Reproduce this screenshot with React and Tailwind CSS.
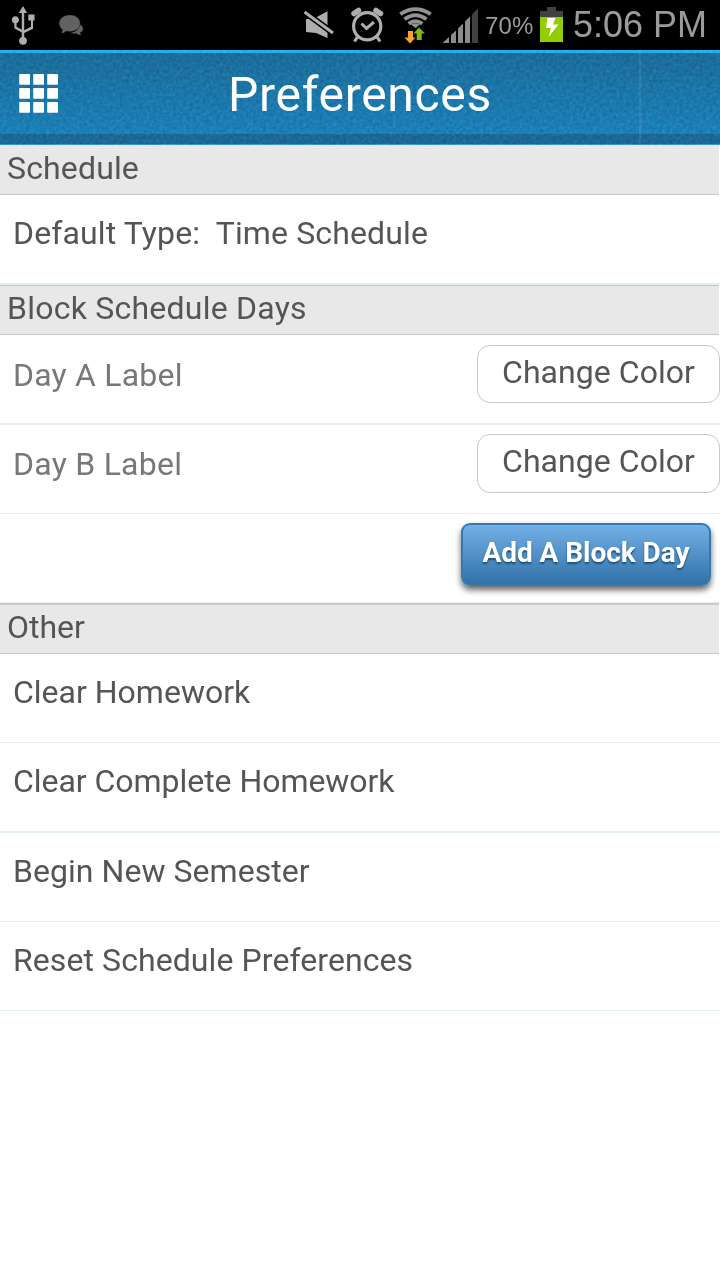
function StatusBar() {
  return (
    <div className="flex h-[50px] items-start bg-black font-['Liberation_Sans',sans-serif] text-[#9b9b9b]">
      <svg className="block h-[50px] w-[485px] shrink-0" viewBox="0 0 485 50" fill="#aeaeae">
        <path d="M23 6l4.200 7h-3v17.200l6.800-3.400V20.500h-2.700v-6h6.200v6h-1.500v8.300l-8.800 4.200v4a4 4 0 1 1-2.400 0v-4.500l-7.500-4.300v-5a3.600 3.600 0 1 1 2.200 0v3.500l5.300 3V13h-3z" />
        <g fill="#626262">
          <path d="M79 23.500c5 3 5.500 7 1 9.300l1 2.200c-2 0-3.500-.6-5-1.700-2 .4-4 .3-5.500-.3 6-1.300 9-4.500 8.500-9.500z" />
          <path d="M70 14.800c6 0 10.300 3.800 10.300 8.400S76 31.700 70 31.700c-1.500 0-2.600-.2-3.700-.5-1.700 1.500-3.500 2.200-5.300 2.200l1.500-3.500c-2.200-1.600-3.500-4-3.500-6.700 0-4.600 4.800-8.400 11-8.400z" stroke="#000" strokeWidth=".5" />
        </g>
        <path d="M306 19h7l14.500-7.800V38L316 33l-10-1z" />
        <path d="M304.500 12l28.500 21" stroke="#000" strokeWidth="6" />
        <path d="M304.500 12l28.500 21" stroke="#aeaeae" strokeWidth="3" />
        <g fill="none" stroke="#aeaeae">
          <circle cx="367.200" cy="26.300" r="13.600" strokeWidth="3.200" />
          <path d="M361.500 23.500l5 5 7.500-6.500" strokeWidth="3" />
          <path d="M358 36l-3.500 5.500M376.500 36l3.500 5.500" strokeWidth="3.200" />
          <path d="M354 13.500l4.500-3M380.500 13.500l-4.500-3" strokeWidth="5.500" strokeLinecap="round" />
        </g>
        <g fill="none" stroke="#929292" strokeWidth="3.800">
          <path d="M400.300 14.200Q415.500 4 430.700 14.200" />
          <path d="M404.500 19.200Q415.500 11 426.500 19.200" />
          <path d="M408.700 23.700Q415.500 18.500 422.300 23.700" />
        </g>
        <path d="M411 24.500q4.500-2.500 9 0L415.500 28z" fill="#929292" />
        <path d="M408 31h5v6.500h2.500L410 43.500 404.500 37.500h3.500z" fill="#fba02c" />
        <path d="M419 27.500l6 6h-3.300V40h-5v-6.500h-3.200z" fill="#80ba10" />
        <path d="M442.500 43l6.500-6v6z M451 35l5-4.500V43h-5z M458 28.500l5-5V43h-5z M465 21.500l5-5V43h-5z" fill="#8c8c8c" />
        <path d="M472 14.500l6-6V43h-6z" fill="#414141" />
      </svg>
      <span className="mt-[12px] w-[55px] shrink-0 text-[24px] leading-[28px] tracking-[0.1px] whitespace-nowrap">70%</span>
      <svg className="block h-[50px] w-[23px] shrink-0" viewBox="0 0 23 50">
        <path d="M0 11h7V7h9v4h7v6H0z" fill="#414141" />
        <path d="M0 17h23v25H0z" fill="#93cd00" />
        <path d="M7.500 18h8L13 24.500h5.500L8.500 37l2.500-9H6z" fill="#fff" />
      </svg>
      <span className="mt-[4px] ml-[10px] text-[36px] leading-[42px] whitespace-nowrap">5:06 PM</span>
    </div>
  );
}

function Header() {
  return (
    <header className="relative flex h-[95px] flex-col bg-[#1b6893]">
      <div className="h-[3px] bg-[#22aff1]" />
      <div className="h-[81px] bg-linear-to-b from-[#1b6c98] to-[#1b80b8]" />
      <div className="h-[10px] bg-[#1b6893]" />
      <div className="h-px bg-[#3396c8]" />
      <svg className="absolute inset-0 h-full w-full opacity-20 mix-blend-overlay" viewBox="0 0 720 95">
        <filter id="grain" colorInterpolationFilters="sRGB">
          <feTurbulence type="fractalNoise" baseFrequency="0.3" numOctaves="2" />
          <feColorMatrix type="matrix" values="1 0 0 0 0  1 0 0 0 0  1 0 0 0 0  0 0 0 0 1" />
        </filter>
        <rect y="3" width="720" height="91" filter="url(#grain)" />
      </svg>
      <div className="absolute top-0 left-[639px] h-[94px] w-[2px] bg-white/8" />
      <div className="absolute inset-0 flex items-start justify-center">
        <svg className="absolute top-[24px] left-[19px] h-[39px] w-[40px]" viewBox="0 0 40 39" fill="#fff">
          {[0, 14, 28].map((y) =>
            [0, 14, 28].map((x) => <rect key={`${x}-${y}`} x={x + 0.2} y={y} width="10.800" height="10.800" rx="0.800" />)
          )}
        </svg>
        <h1 className="mt-[17px] text-[48px] leading-[56px] tracking-[0.7px] text-white">Preferences</h1>
      </div>
    </header>
  );
}

function Section({ title, className = "leading-[46px] tracking-[0.15px]" }) {
  return (
    <h2 className={`mr-px border-b border-[#c8c8c8] bg-[#e8e8e8] pl-[7px] text-[32px] ${className}`}>
      {title}
    </h2>
  );
}

function Row({ children, className }) {
  return (
    <div className={`flex items-start border-[#e3eff2] pl-[13px] text-[32px] leading-[76px] whitespace-pre ${className}`}>
      {children}
    </div>
  );
}

function BlockDay({ label, rowClass, buttonClass, labelClass }) {
  return (
    <Row className={rowClass}>
      <span className={`text-[#787878] ${labelClass}`}>{label}</span>
      <button className={`ml-auto w-[243px] rounded-[13px] border border-[#c8c8c8] bg-white leading-[52px] tracking-[0.05px] ${buttonClass}`}>
        <span className="block h-full">Change Color</span>
      </button>
    </Row>
  );
}

export default function App() {
  return (
    <div className="min-h-[1280px] w-[720px] overflow-hidden bg-white font-[Roboto,sans-serif] text-[#555555]">
      <StatusBar />
      <Header />
      <main>
        <Section title="Schedule" className="h-[50px] leading-[46px] tracking-[0.15px]" />
        <Row className="h-[90px] border-b-2 tracking-[0.13px]">Default Type:  Time Schedule</Row>
        <Section title="Block Schedule Days" className="h-[50px] border-t leading-[44px] tracking-[0.23px]" />
        <BlockDay label="Day A Label" rowClass="h-[90px] border-b-2 tracking-[0.2px]" labelClass="mt-[2px]" buttonClass="mt-[10px] h-[58px]" />
        <BlockDay label="Day B Label" rowClass="h-[89px] border-b tracking-[0.25px]" labelClass="mt-px" buttonClass="mt-[9px] h-[59px]" />
        <Row className="h-[89px] border-b">
          <button className="mt-[9px] mr-[9px] ml-auto h-[63px] w-[250px] rounded-[9px] border-2 border-[#3279b1] bg-linear-to-b from-[#72b0e6] to-[#3272a8] text-[28px] leading-[55px] font-bold tracking-[-0.05px] text-white shadow-[0_4px_6px_rgba(0,0,0,0.6)] [text-shadow:0_2px_2px_#1f5078]">
            <span className="block h-full">Add A Block Day</span>
          </button>
        </Row>
        <Section title="Other" className="h-[51px] border-t-2 leading-[44px] tracking-[-0.05px]" />
        <Row className="h-[89px] border-b tracking-[0px]">Clear Homework</Row>
        <Row className="h-[90px] border-b-2 tracking-[-0.04px]">Clear Complete Homework</Row>
        <Row className="h-[89px] border-b tracking-[0.05px]">Begin New Semester</Row>
        <Row className="h-[89px] border-b tracking-[0.08px]">Reset Schedule Preferences</Row>
      </main>
    </div>
  );
}
